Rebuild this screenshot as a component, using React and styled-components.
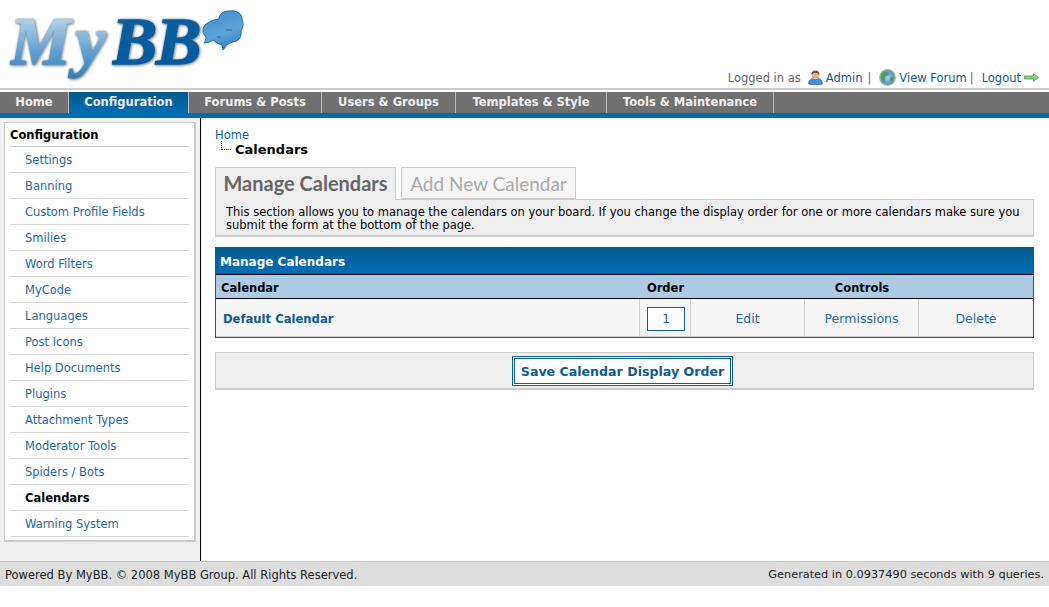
import React from 'react';
import styled, { createGlobalStyle } from 'styled-components';

const GlobalStyle = createGlobalStyle`
  html, body {
    margin: 0;
    padding: 0;
    background: #fff;
    font-family: "DejaVu Sans", Verdana, sans-serif;
    font-size: 11.5px;
    color: #000;
  }
  a {
    color: #0f5c8e;
    text-decoration: none;
  }
`;

const Header = styled.div`
  height: 88px;
  display: flex;
  justify-content: space-between;
  align-items: flex-end;
  border-bottom: 2px solid #ccc;
`;

const Logo = styled.div`
  display: flex;
  align-items: flex-start;
  height: 88px;
  padding: 7px 0 0 10px;
  box-sizing: border-box;
`;

const LogoWord = styled.div`
  font-family: "Liberation Serif", serif;
  font-weight: bold;
  font-style: italic;
  font-size: 68px;
  line-height: 68px;
  filter: drop-shadow(0 0 1px #76828c) drop-shadow(1px 1px 1px rgba(0, 0, 0, .35));
`;

const LogoPart = styled.span`
  background: ${p => p.$dark
    ? 'linear-gradient(#0f5f9e, #005a9c)'
    : 'linear-gradient(#b5d2ec 20%, #5c9fd3 65%, #2f7fbe)'};
  -webkit-background-clip: text;
  background-clip: text;
  color: transparent;
  -webkit-text-stroke: 1.5px transparent;
  letter-spacing: ${p => p.$dark ? -1 : 5}px;
  padding-right: ${p => p.$dark ? 3 : 1}px;
`;

const Bubble = styled.svg`
  width: 43px;
  height: 41px;
  margin: 3px 0 0 -1px;
`;

const UserBar = styled.div`
  display: flex;
  align-items: center;
  padding: 0 10px 2px 0;
  color: #666;
  line-height: 16px;
  white-space: nowrap;
`;

const UserLink = styled.a`
  display: flex;
  align-items: center;
  margin-left: ${p => p.$gap}px;
`;

const Pipe = styled.span`
  color: #81508f;
  margin-left: ${p => p.$gap}px;
`;

const NavBar = styled.div`
  margin-top: 2px;
  height: 21px;
  background: #707070;
  border-bottom: 5px solid #026cb1;
  display: flex;
`;

const NavTab = styled.a`
  display: block;
  box-sizing: border-box;
  height: 21px;
  line-height: 21px;
  width: ${p => p.$w}px;
  text-align: center;
  font-weight: bold;
  color: #f0f0f0;
  border-right: 1px solid #bbb;
  background: ${p => p.$active ? 'linear-gradient(#045a8c, #026cb1)' : 'transparent'};
`;

const Body = styled.div`
  display: flex;
  height: 443px;
`;

const Sidebar = styled.div`
  flex: none;
  box-sizing: border-box;
  background: #f0f0f0;
  border-right: 1px solid #000;
  width: 201px;
  padding: 4px 4px 0;
`;

const SideBox = styled.div`
  background: #fff;
  border: 1px solid #ccc;
  border-width: 1px 2px 2px 1px;
  box-sizing: border-box;
  width: 192px;
  height: 420px;
  padding: 0 5px;
`;

const SideTitle = styled.div`
  height: 23px;
  line-height: 25px;
  font-weight: bold;
  border-bottom: 1px solid #ccc;
`;

const SideItem = styled.a`
  display: block;
  height: 25px;
  line-height: 27px;
  padding-left: 15px;
  border-bottom: 1px solid #d8d8d8;
  color: ${p => p.$active ? '#000' : '#24699a'};
  font-weight: ${p => p.$active ? 'bold' : 'normal'};
`;

const Content = styled.div`
  flex: 1;
  padding: 10px 15px 0 14px;
  min-width: 0;
`;

const Crumb = styled.div`
  position: relative;
  height: 39px;
  a {
    display: block;
    line-height: 14px;
  }
  strong {
    display: block;
    margin: 0 0 0 20px;
    font-size: 13px;
    line-height: 15px;
  }
`;

const CrumbBranch = styled.span`
  position: absolute;
  left: 6px;
  top: 13px;
  width: 9px;
  height: 8px;
  border-left: 1px dotted #000;
  border-bottom: 1px dotted #000;
`;

const Tabs = styled.div`
  display: flex;
  gap: 5px;
  height: 32px;
`;

const Tab = styled.div`
  font-family: Lato, sans-serif;
  font-size: ${p => p.$active ? 20 : 19}px;
  font-weight: ${p => p.$active ? 700 : 400};
  line-height: 31px;
  box-sizing: border-box;
  width: ${p => p.$w}px;
  text-align: center;
  white-space: nowrap;
  border: 1px solid #ccc;
  border-bottom: ${p => p.$active ? 'none' : '1px solid #ccc'};
  background: ${p => p.$active ? '#eee' : '#f6f6f6'};
  color: ${p => p.$active ? '#666' : '#aaa'};
  height: ${p => p.$active ? 33 : 32}px;
  position: relative;
  z-index: 1;
`;

const Description = styled.div`
  box-sizing: border-box;
  height: 38px;
  padding: 6px 10px 0;
  background: #eee;
  border: 1px solid #ccc;
  border-width: 1px 1px 2px 1px;
  line-height: 13px;
  margin-bottom: 10px;
`;

const Table = styled.table`
  width: 100%;
  table-layout: fixed;
  border-collapse: separate;
  border-spacing: 0;
  border: 1px solid #0f5c8e;
  border-width: 0 1px 1px 1px;
`;

const Caption = styled.th`
  height: 28px;
  padding: 2px 4px 0;
  box-sizing: border-box;
  text-align: left;
  font-size: 12px;
  font-weight: bold;
  color: #fff;
  background: linear-gradient(#045a8c, #026cb1 85%);
  border-bottom: 1px solid #000;
`;

const HeadCell = styled.th`
  height: 24px;
  box-sizing: border-box;
  padding: 2px 5px 0;
  text-align: ${p => p.$left ? 'left' : 'center'};
  font-weight: bold;
  background: #adcbe7;
  border-bottom: 1px solid #000;
`;

const Cell = styled.td`
  height: 38px;
  box-sizing: border-box;
  padding: 2px 0 0;
  text-align: center;
  background: #f5f5f5;
  border-right: ${p => p.$last ? 'none' : '1px solid #ccc'};
  border-bottom: 1px solid #ccc;
  font-size: 12.5px;
  a { color: #24699a; }
`;

const NameCell = styled(Cell)`
  text-align: left;
  padding-left: 7px;
  font-size: 11.6px;
  font-weight: bold;
  a { color: #0f5c8e; }
`;

const OrderInput = styled.input`
  box-sizing: border-box;
  display: block;
  margin: 0 0 0 7px;
  width: 38px;
  height: 24px;
  padding: 0;
  text-align: center;
  font: 12px "DejaVu Sans", sans-serif;
  color: #0f5c8e;
  border: 1px solid #0f5c8e;
  background: #fff;
`;

const Buttons = styled.div`
  box-sizing: border-box;
  height: 38px;
  margin-top: 14px;
  padding-right: 4px;
  background: #eee;
  border: 1px solid #ccc;
  border-width: 1px 1px 2px 1px;
  display: flex;
  justify-content: center;
  align-items: center;
`;

const SaveButton = styled.button`
  box-sizing: border-box;
  width: 221px;
  height: 30px;
  padding: 1px 0 0;
  background: #fff;
  border: 3px double #0f5c8e;
  color: #0f5c8e;
  font: bold 12.6px "DejaVu Sans", sans-serif;
`;

const Footer = styled.div`
  box-sizing: border-box;
  height: 25px;
  padding: 1px 5px 0;
  background: #ddd;
  border-top: 1px solid #c4c4c4;
  display: flex;
  justify-content: space-between;
  align-items: center;
  color: #222;
`;

const FooterStats = styled.span`
  font-size: 11.3px;
`;

const menuItems = [
  'Settings', 'Banning', 'Custom Profile Fields', 'Smilies', 'Word Filters', 'MyCode',
  'Languages', 'Post Icons', 'Help Documents', 'Plugins', 'Attachment Types',
  'Moderator Tools', 'Spiders / Bots', 'Calendars', 'Warning System',
];

const navTabs = [
  ['Home', 69], ['Configuration', 120], ['Forums & Posts', 133], ['Users & Groups', 134],
  ['Templates & Style', 151], ['Tools & Maintenance', 167],
];

const BubbleIcon = () => (
  <Bubble viewBox="0 0 43 41">
    <defs>
      <linearGradient id="bub" x1="0.2" y1="0" x2="0.6" y2="1">
        <stop offset="0" stopColor="#3f8ccc" />
        <stop offset="0.6" stopColor="#5fa3da" />
        <stop offset="1" stopColor="#2f7fc2" />
      </linearGradient>
    </defs>
    <path
      fill="url(#bub)"
      stroke="#1f6fb4"
      strokeWidth="1"
      d="M1 20C1 14 9 10 17 9C17 4 21 1 27 1C34 0 40 3 40 9C42 13 41 18 39 21C40 27 37 31 31 32C28 33 26 34 25 35L21 40L20 35C16 34 13 32 11 30C8 32 5 33 2 33C3 31 4 29 4 27C2 25 1 23 1 20Z"
    />
    <path d="M24 20h6M15 27h4" stroke="#1d6aa8" strokeWidth="1" fill="none" />
  </Bubble>
);

const UserIcon = () => (
  <svg width="15" height="15" viewBox="0 0 15 15" style={{ marginRight: 3 }}>
    <path d="M.7 14c0-3 1-4.500 3.500-5.500c2 1.500 4.500 1.500 6.600 0C13.300 9.500 14.300 11 14.300 14c-1 .8-12.600 .8-13.600 0z" fill="#3f8fe4" stroke="#1f5fa8" strokeWidth=".7" />
    <circle cx="7.500" cy="5" r="3.500" fill="#e8b48c" stroke="#a8683c" strokeWidth=".4" />
    <path d="M3.800 5C3.400 1.500 5.500 .6 7.500 .6S11.600 1.500 11.200 5C10.500 3.500 9 3 7.500 3S4.500 3.500 3.800 5z" fill="#8a4a22" />
  </svg>
);

const GlobeIcon = () => (
  <svg width="17" height="17" viewBox="0 0 17 17" style={{ marginRight: 3 }}>
    <defs>
      <radialGradient id="globe" cx="0.5" cy="0.5" r="0.6">
        <stop offset="0" stopColor="#a8d0f0" />
        <stop offset="1" stopColor="#2f7cc0" />
      </radialGradient>
    </defs>
    <circle cx="8.500" cy="8.500" r="7.700" fill="url(#globe)" stroke="#8ac48a" strokeWidth="1.400" />
    <path d="M4 3.500c3-1.500 5-.5 6 1.500c-1 2-3 1-4 3s1 4 0 5.500C3.500 12 2.500 9 2.500 7.500c0-2 .5-3 1.500-4zM12 8c1.500 0 2.500 1 2.500 2c-.5 1.500-1.500 2.500-2.500 2.500c-1-1.500-1-3.500 0-4.500z" fill="#4f9a5a" />
  </svg>
);

const ArrowIcon = () => (
  <svg width="15" height="9" viewBox="0 0 15 9" style={{ marginLeft: 3 }}>
    <path d="M.5 3h9V.7L14.500 4.500L9.500 8.300V6h-9z" fill="#8fce7c" stroke="#4f9a4f" strokeWidth=".8" />
  </svg>
);

const App = () => (
  <>
    <GlobalStyle />
    <Header>
      <Logo>
        <LogoWord>
          <LogoPart>My</LogoPart>
          <LogoPart $dark>BB</LogoPart>
        </LogoWord>
        <BubbleIcon />
      </Logo>
      <UserBar>
        Logged in as
        <UserLink href="#" $gap={7}><UserIcon />Admin</UserLink>
        <Pipe $gap={5}>|</Pipe>
        <UserLink href="#" $gap={8}><GlobeIcon />View Forum</UserLink>
        <Pipe $gap={3}>|</Pipe>
        <UserLink href="#" $gap={8}>Logout<ArrowIcon /></UserLink>
      </UserBar>
    </Header>
    <NavBar>
      {navTabs.map(([label, w]) => (
        <NavTab key={label} href="#" $w={w} $active={label === 'Configuration'}>{label}</NavTab>
      ))}
    </NavBar>
    <Body>
      <Sidebar>
        <SideBox>
          <SideTitle>Configuration</SideTitle>
          {menuItems.map(item => (
            <SideItem key={item} href="#" $active={item === 'Calendars'}>{item}</SideItem>
          ))}
        </SideBox>
      </Sidebar>
      <Content>
        <Crumb>
          <a href="#">Home</a>
          <CrumbBranch />
          <strong>Calendars</strong>
        </Crumb>
        <Tabs>
          <Tab $active $w={181}>Manage Calendars</Tab>
          <Tab $w={175}>Add New Calendar</Tab>
        </Tabs>
        <Description>
          This section allows you to manage the calendars on your board. If you change the display order for one or more calendars make sure you submit the form at the bottom of the page.
        </Description>
        <Table>
          <colgroup>
            <col />
            <col style={{ width: 51 }} />
            <col style={{ width: 114 }} />
            <col style={{ width: 114 }} />
            <col style={{ width: 114 }} />
          </colgroup>
          <thead>
            <tr><Caption colSpan={5}>Manage Calendars</Caption></tr>
            <tr>
              <HeadCell $left>Calendar</HeadCell>
              <HeadCell>Order</HeadCell>
              <HeadCell colSpan={3}>Controls</HeadCell>
            </tr>
          </thead>
          <tbody>
            <tr>
              <NameCell><a href="#">Default Calendar</a></NameCell>
              <Cell><OrderInput defaultValue="1" /></Cell>
              <Cell><a href="#">Edit</a></Cell>
              <Cell><a href="#">Permissions</a></Cell>
              <Cell $last><a href="#">Delete</a></Cell>
            </tr>
          </tbody>
        </Table>
        <Buttons>
          <SaveButton>Save Calendar Display Order</SaveButton>
        </Buttons>
      </Content>
    </Body>
    <Footer>
      <span>Powered By MyBB. © 2008 MyBB Group. All Rights Reserved.</span>
      <FooterStats>Generated in 0.0937490 seconds with 9 queries.</FooterStats>
    </Footer>
  </>
);

export default App;
